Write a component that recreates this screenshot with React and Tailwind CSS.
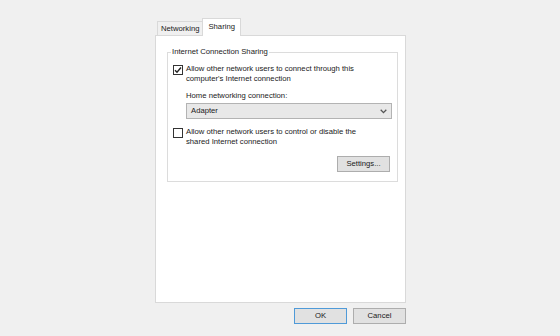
function Checkbox({ checked }) {
    return (
        <div className="w-[10px] h-[10px] mt-[1px] shrink-0 border border-[#333] bg-white flex items-center justify-center">
            {checked && (
                <svg width="8" height="8" viewBox="0 0 8 8">
                    <path d="M1 4.2 L3 6.3 L7 1.5" fill="none" stroke="#222" strokeWidth="1.4" />
                </svg>
            )}
        </div>
    );
}

function Button({ children, primary, className = "" }) {
    return (
        <div
            className={`h-[16px] flex items-center justify-center bg-[#e1e1e1] border ${
                primary ? "border-[#4f9ad8]" : "border-[#adadad]"
            } ${className}`}
        >
            {children}
        </div>
    );
}

export default function App() {
    return (
        <div className="w-[560px] h-[336px] bg-[#f0f0f0] pl-[155px] pt-[18px] font-['Liberation_Sans',Arial,sans-serif] text-[7.7px] leading-[10px] text-[#1a1a1a]">
            <div className="w-[251px] flex flex-col">
                {/* tabs */}
                <div className="flex items-end h-[17px] pl-[2px] relative z-10">
                    <div className="h-[14px] px-[3px] flex items-center border border-b-0 border-[#d9d9d9] bg-[#f0f0f0]">
                        Networking
                    </div>
                    <div className="h-[18px] -mb-px -ml-px px-[5px] pb-[2px] flex items-center border border-b-0 border-[#d9d9d9] bg-white">
                        Sharing
                    </div>
                </div>

                {/* panel */}
                <div className="h-[268px] bg-white border border-[#d9d9d9] pl-[11px] pt-[11px]">
                    <fieldset className="w-[231px] h-[135px] border border-[#dcdcdc] pl-[5px] flex flex-col">
                        <legend className="-ml-[2px] px-[1px]">Internet Connection Sharing</legend>

                        <div className="flex items-start gap-[3px] mt-[7px]">
                            <Checkbox checked />
                            <div>
                                Allow other network users to connect through this
                                <br />
                                computer's Internet connection
                            </div>
                        </div>

                        <div className="ml-[13px] mt-[7px]">Home networking connection:</div>
                        <div className="ml-[13px] mt-[2px] w-[206px] h-[16px] bg-[#e8e8e8] border border-[#b3b3b3] flex items-center justify-between pl-[4px] pr-[4px]">
                            <span>Adapter</span>
                            <svg width="7" height="5" viewBox="0 0 7 5">
                                <path d="M0.7 0.8 L3.5 3.6 L6.3 0.8" fill="none" stroke="#555" strokeWidth="1.3" />
                            </svg>
                        </div>

                        <div className="flex items-start gap-[3px] mt-[8px]">
                            <Checkbox />
                            <div>
                                Allow other network users to control or disable the
                                <br />
                                shared Internet connection
                            </div>
                        </div>

                        <div className="self-end mr-[7px] mt-[9px]">
                            <Button className="w-[53px]">Settings...</Button>
                        </div>
                    </fieldset>
                </div>

                {/* dialog buttons */}
                <div className="flex justify-end gap-[6px] mt-[5px]">
                    <Button primary className="w-[53px]">OK</Button>
                    <Button className="w-[53px]">Cancel</Button>
                </div>
            </div>
        </div>
    );
}
